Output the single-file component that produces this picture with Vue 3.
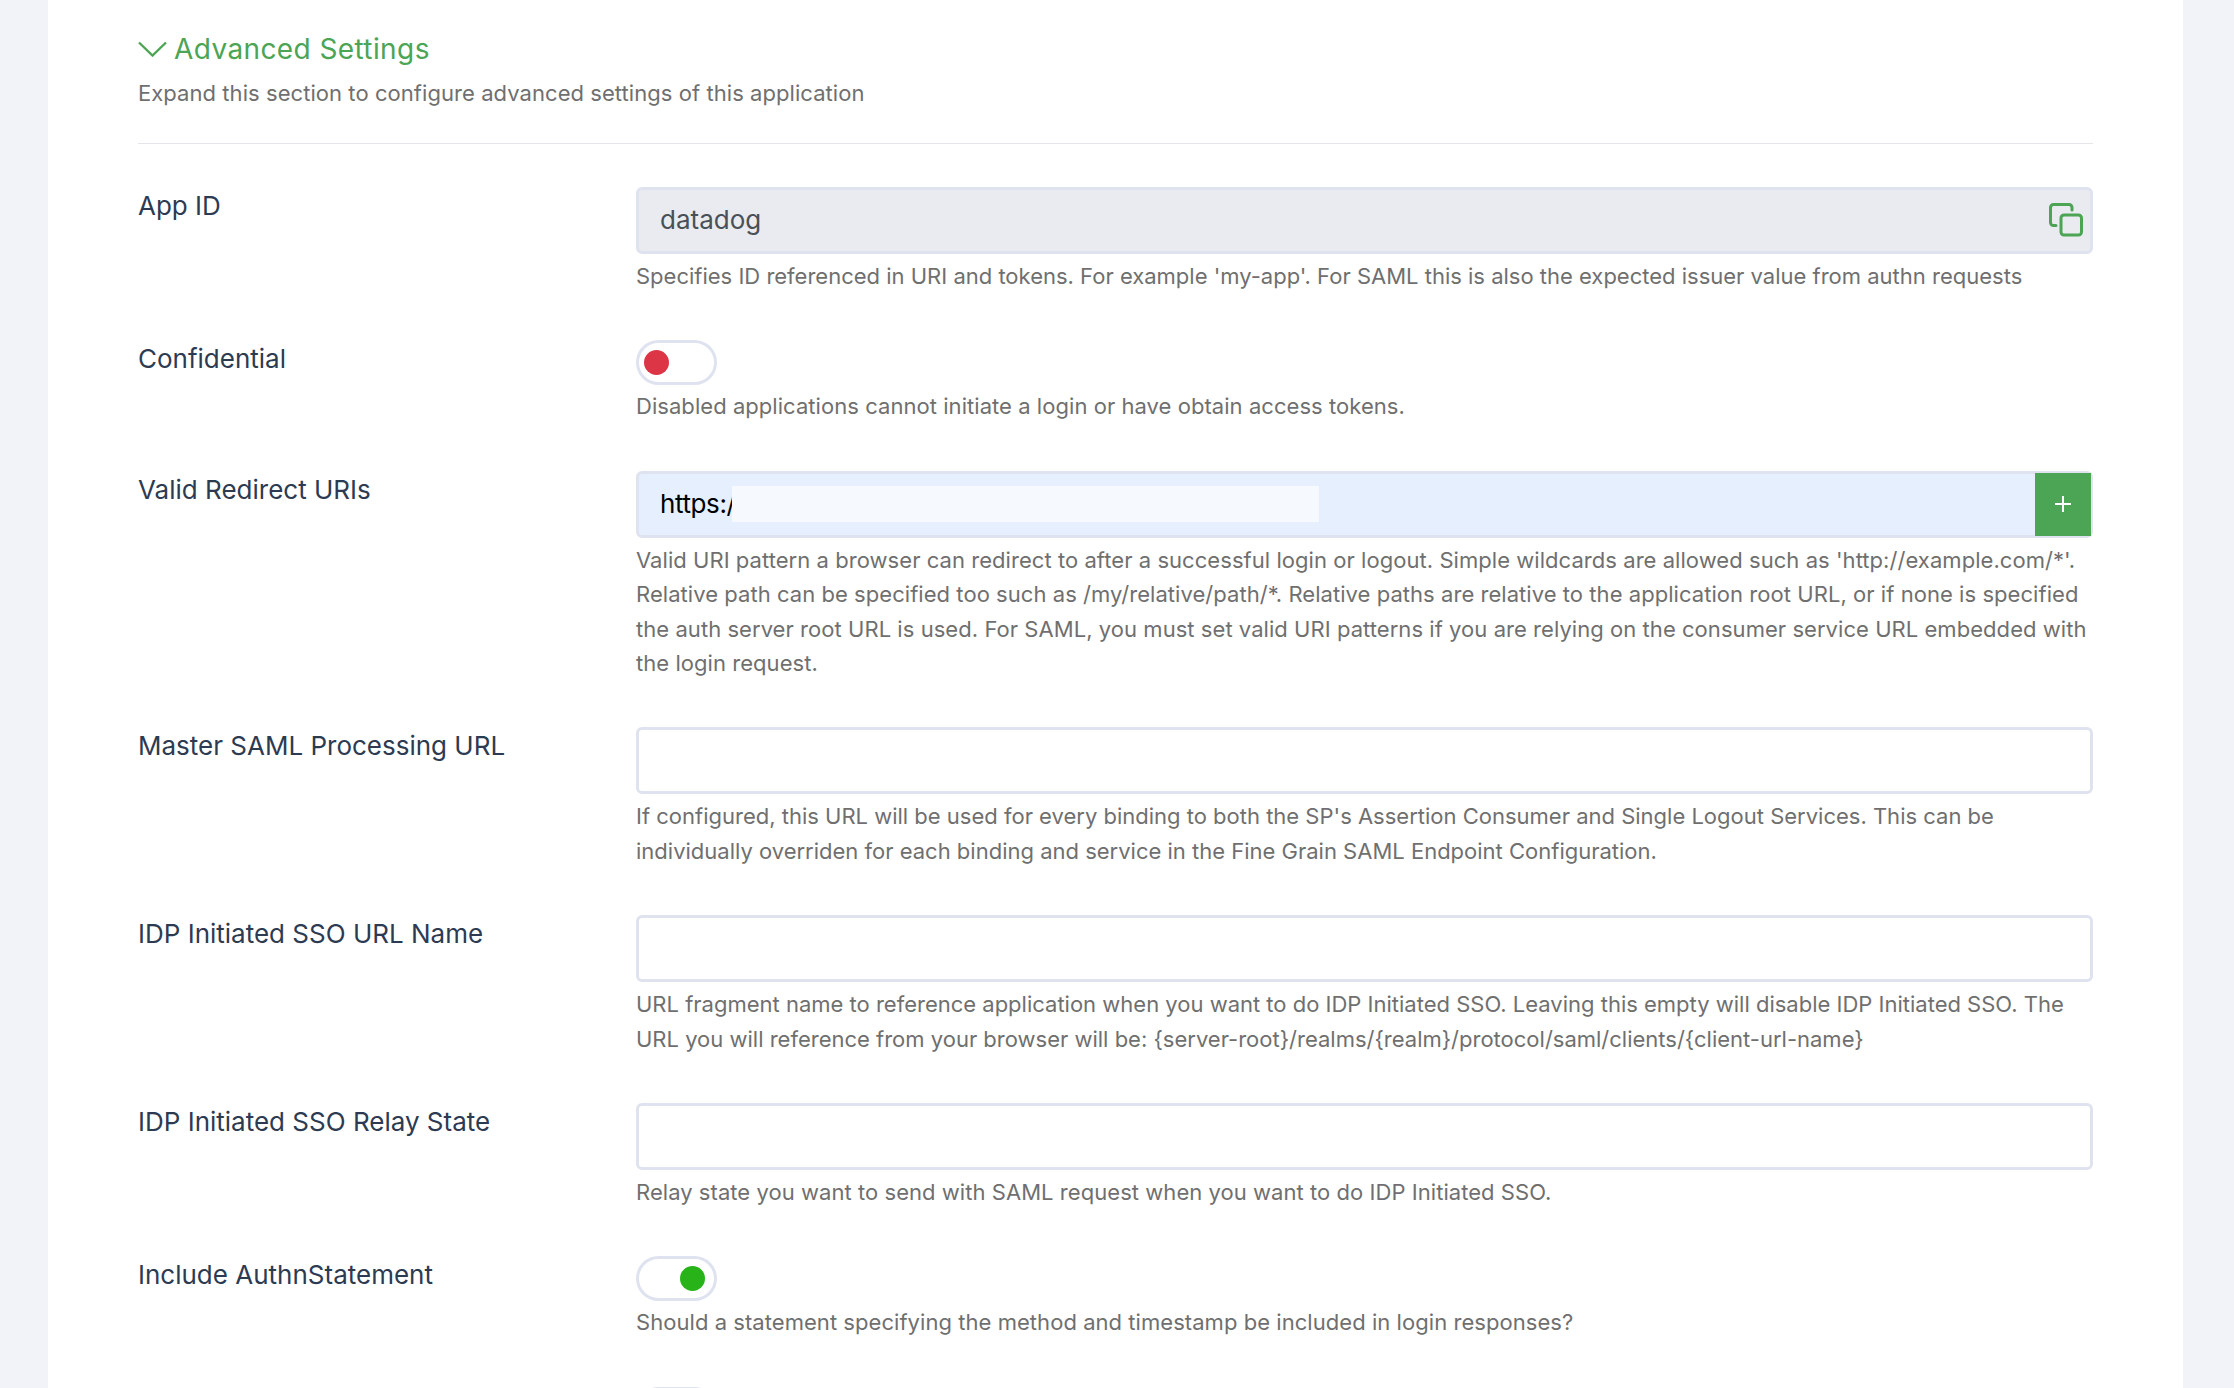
<template>
  <div class="page">
    <div class="card">
      <div class="section-head">
        <div class="section-title">
          <svg class="chevron" width="29" height="16" viewBox="0 0 29 16" fill="none">
            <path d="M1 1.5 L14.5 14.5 L28 1.5" stroke="#4ca455" stroke-width="2.4" />
          </svg>
          <span>Advanced Settings</span>
        </div>
        <p class="section-desc">Expand this section to configure advanced settings of this application</p>
      </div>

      <div class="row">
        <label class="row-label">App ID</label>
        <div>
          <div class="field field-disabled">
            <input class="field-input" value="datadog" readonly />
            <svg class="copy-icon" width="34" height="35" viewBox="0 0 34 35" fill="none" stroke="#4ca455" stroke-width="3">
              <path d="M23 7 V4.5 A3 3 0 0 0 20 1.5 H4.5 A3 3 0 0 0 1.5 4.5 V19.5 A3 3 0 0 0 4.5 22.5 H7" stroke-linecap="round" />
              <rect x="12" y="12" width="20.5" height="20" rx="3" />
            </svg>
          </div>
          <p class="help help-tight">Specifies ID referenced in URI and tokens. For example 'my-app'. For SAML this is also the expected issuer value from authn requests</p>
        </div>
      </div>

      <div class="row">
        <label class="row-label">Confidential</label>
        <div>
          <div class="toggle"><span class="toggle-dot dot-off"></span></div>
          <p class="help toggle-help">Disabled applications cannot initiate a login or have obtain access tokens.</p>
        </div>
      </div>

      <div class="row">
        <label class="row-label">Valid Redirect URIs</label>
        <div>
          <div class="field field-autofill">
            <input class="field-input" value="https://" />
            <div class="redacted"></div>
            <button class="add-btn">
              <svg width="18" height="18" viewBox="0 0 18 18" stroke="#fff" stroke-width="2">
                <path d="M9 1 V17 M1 9 H17" />
              </svg>
            </button>
          </div>
          <p class="help">Valid URI pattern a browser can redirect to after a successful login or logout. Simple wildcards are allowed such as 'http://example.com/*'. Relative path can be specified too such as /my/relative/path/*. Relative paths are relative to the application root URL, or if none is specified the auth server root URL is used. For SAML, you must set valid URI patterns if you are relying on the consumer service URL embedded with the login request.</p>
        </div>
      </div>

      <div v-for="item in textRows" :key="item.label" class="row">
        <label class="row-label">{{ item.label }}</label>
        <div>
          <div class="field">
            <input class="field-input" />
          </div>
          <p class="help" :class="{ 'help-tight': item.tight }">{{ item.help }}</p>
        </div>
      </div>

      <div class="row">
        <label class="row-label">Include AuthnStatement</label>
        <div>
          <div class="toggle"><span class="toggle-dot dot-on"></span></div>
          <p class="help toggle-help">Should a statement specifying the method and timestamp be included in login responses?</p>
        </div>
      </div>

      <div class="row">
        <label class="row-label"></label>
        <div>
          <div class="toggle"></div>
        </div>
      </div>
    </div>
  </div>
</template>

<script setup>
const textRows = [
  {
    label: 'Master SAML Processing URL',
    tight: true,
    help: "If configured, this URL will be used for every binding to both the SP's Assertion Consumer and Single Logout Services. This can be individually overriden for each binding and service in the Fine Grain SAML Endpoint Configuration."
  },
  {
    label: 'IDP Initiated SSO URL Name',
    tight: true,
    help: 'URL fragment name to reference application when you want to do IDP Initiated SSO. Leaving this empty will disable IDP Initiated SSO. The URL you will reference from your browser will be: {server-root}/realms/{realm}/protocol/saml/clients/{client-url-name}'
  },
  {
    label: 'IDP Initiated SSO Relay State',
    help: 'Relay state you want to send with SAML request when you want to do IDP Initiated SSO.'
  }
]
</script>

<style>
html,
body {
  margin: 0;
  overflow: hidden;
  background: #f1f3f9;
}
</style>

<style scoped>
.page {
  height: 1388px;
  overflow: hidden;
  padding: 0 51px 0 48px;
  box-sizing: border-box;
  font-family: Inter, "Noto Sans", sans-serif;
}

.card {
  background: #fff;
  height: 100%;
  padding: 29px 90px 0;
  box-sizing: border-box;
}

.section-head {
  border-bottom: 1px solid #e4e6ea;
  height: 115px;
  box-sizing: border-box;
  margin-bottom: 43px;
}

.section-title {
  display: flex;
  align-items: center;
  gap: 7px;
  font-size: 28px;
  line-height: 40px;
  letter-spacing: 0.4px;
  color: #4ca455;
}

.chevron {
  margin-top: -1px;
}

.section-desc {
  margin: 7px 0 0;
  font-size: 22px;
  line-height: 34px;
  letter-spacing: 0.06px;
  color: #6f6f6f;
}

.row {
  display: grid;
  grid-template-columns: 498px 1fr;
  margin-bottom: 47px;
}

.row-label {
  font-size: 26px;
  line-height: 38px;
  color: #2d3b52;
}

.field {
  position: relative;
  display: flex;
  height: 67px;
  border: 3px solid #dfe3ef;
  border-radius: 6px;
  box-sizing: border-box;
  background: #fff;
}

.field-disabled {
  background: #e9ebf0;
}

.field-autofill {
  background: #e6effd;
}

.field-input {
  flex: 1;
  min-width: 0;
  border: 0;
  outline: 0;
  padding: 0 21px 2px;
  background: transparent;
  font-family: inherit;
  font-size: 26px;
  color: #495057;
}

.field-autofill .field-input {
  color: #000;
  letter-spacing: -0.4px;
}

.copy-icon {
  position: absolute;
  right: 7px;
  top: 13px;
}

.redacted {
  position: absolute;
  left: 93px;
  top: 12px;
  width: 587px;
  height: 36px;
  background: #f6f9fe;
}

.add-btn {
  width: 56px;
  border: 0;
  padding: 0;
  margin: -1px -1px -1px 2px;
  background: #4ca455;
  display: flex;
  align-items: center;
  justify-content: center;
}

.help {
  margin: 5px 0 0;
  font-size: 22px;
  line-height: 34.4px;
  letter-spacing: 0.05px;
  color: #6f6f6f;
}

.help-tight {
  letter-spacing: 0;
}

.toggle-help {
  margin-top: 4px;
}

.toggle {
  position: relative;
  width: 81px;
  height: 45px;
  border: 3px solid #dfe3ef;
  border-radius: 23px;
  box-sizing: border-box;
  background: #fff;
}

.toggle-dot {
  position: absolute;
  top: 6.5px;
  width: 25px;
  height: 25px;
  border-radius: 50%;
}

.dot-off {
  left: 5px;
  background: #dc3545;
}

.dot-on {
  right: 9px;
  background: #28b418;
}
</style>
